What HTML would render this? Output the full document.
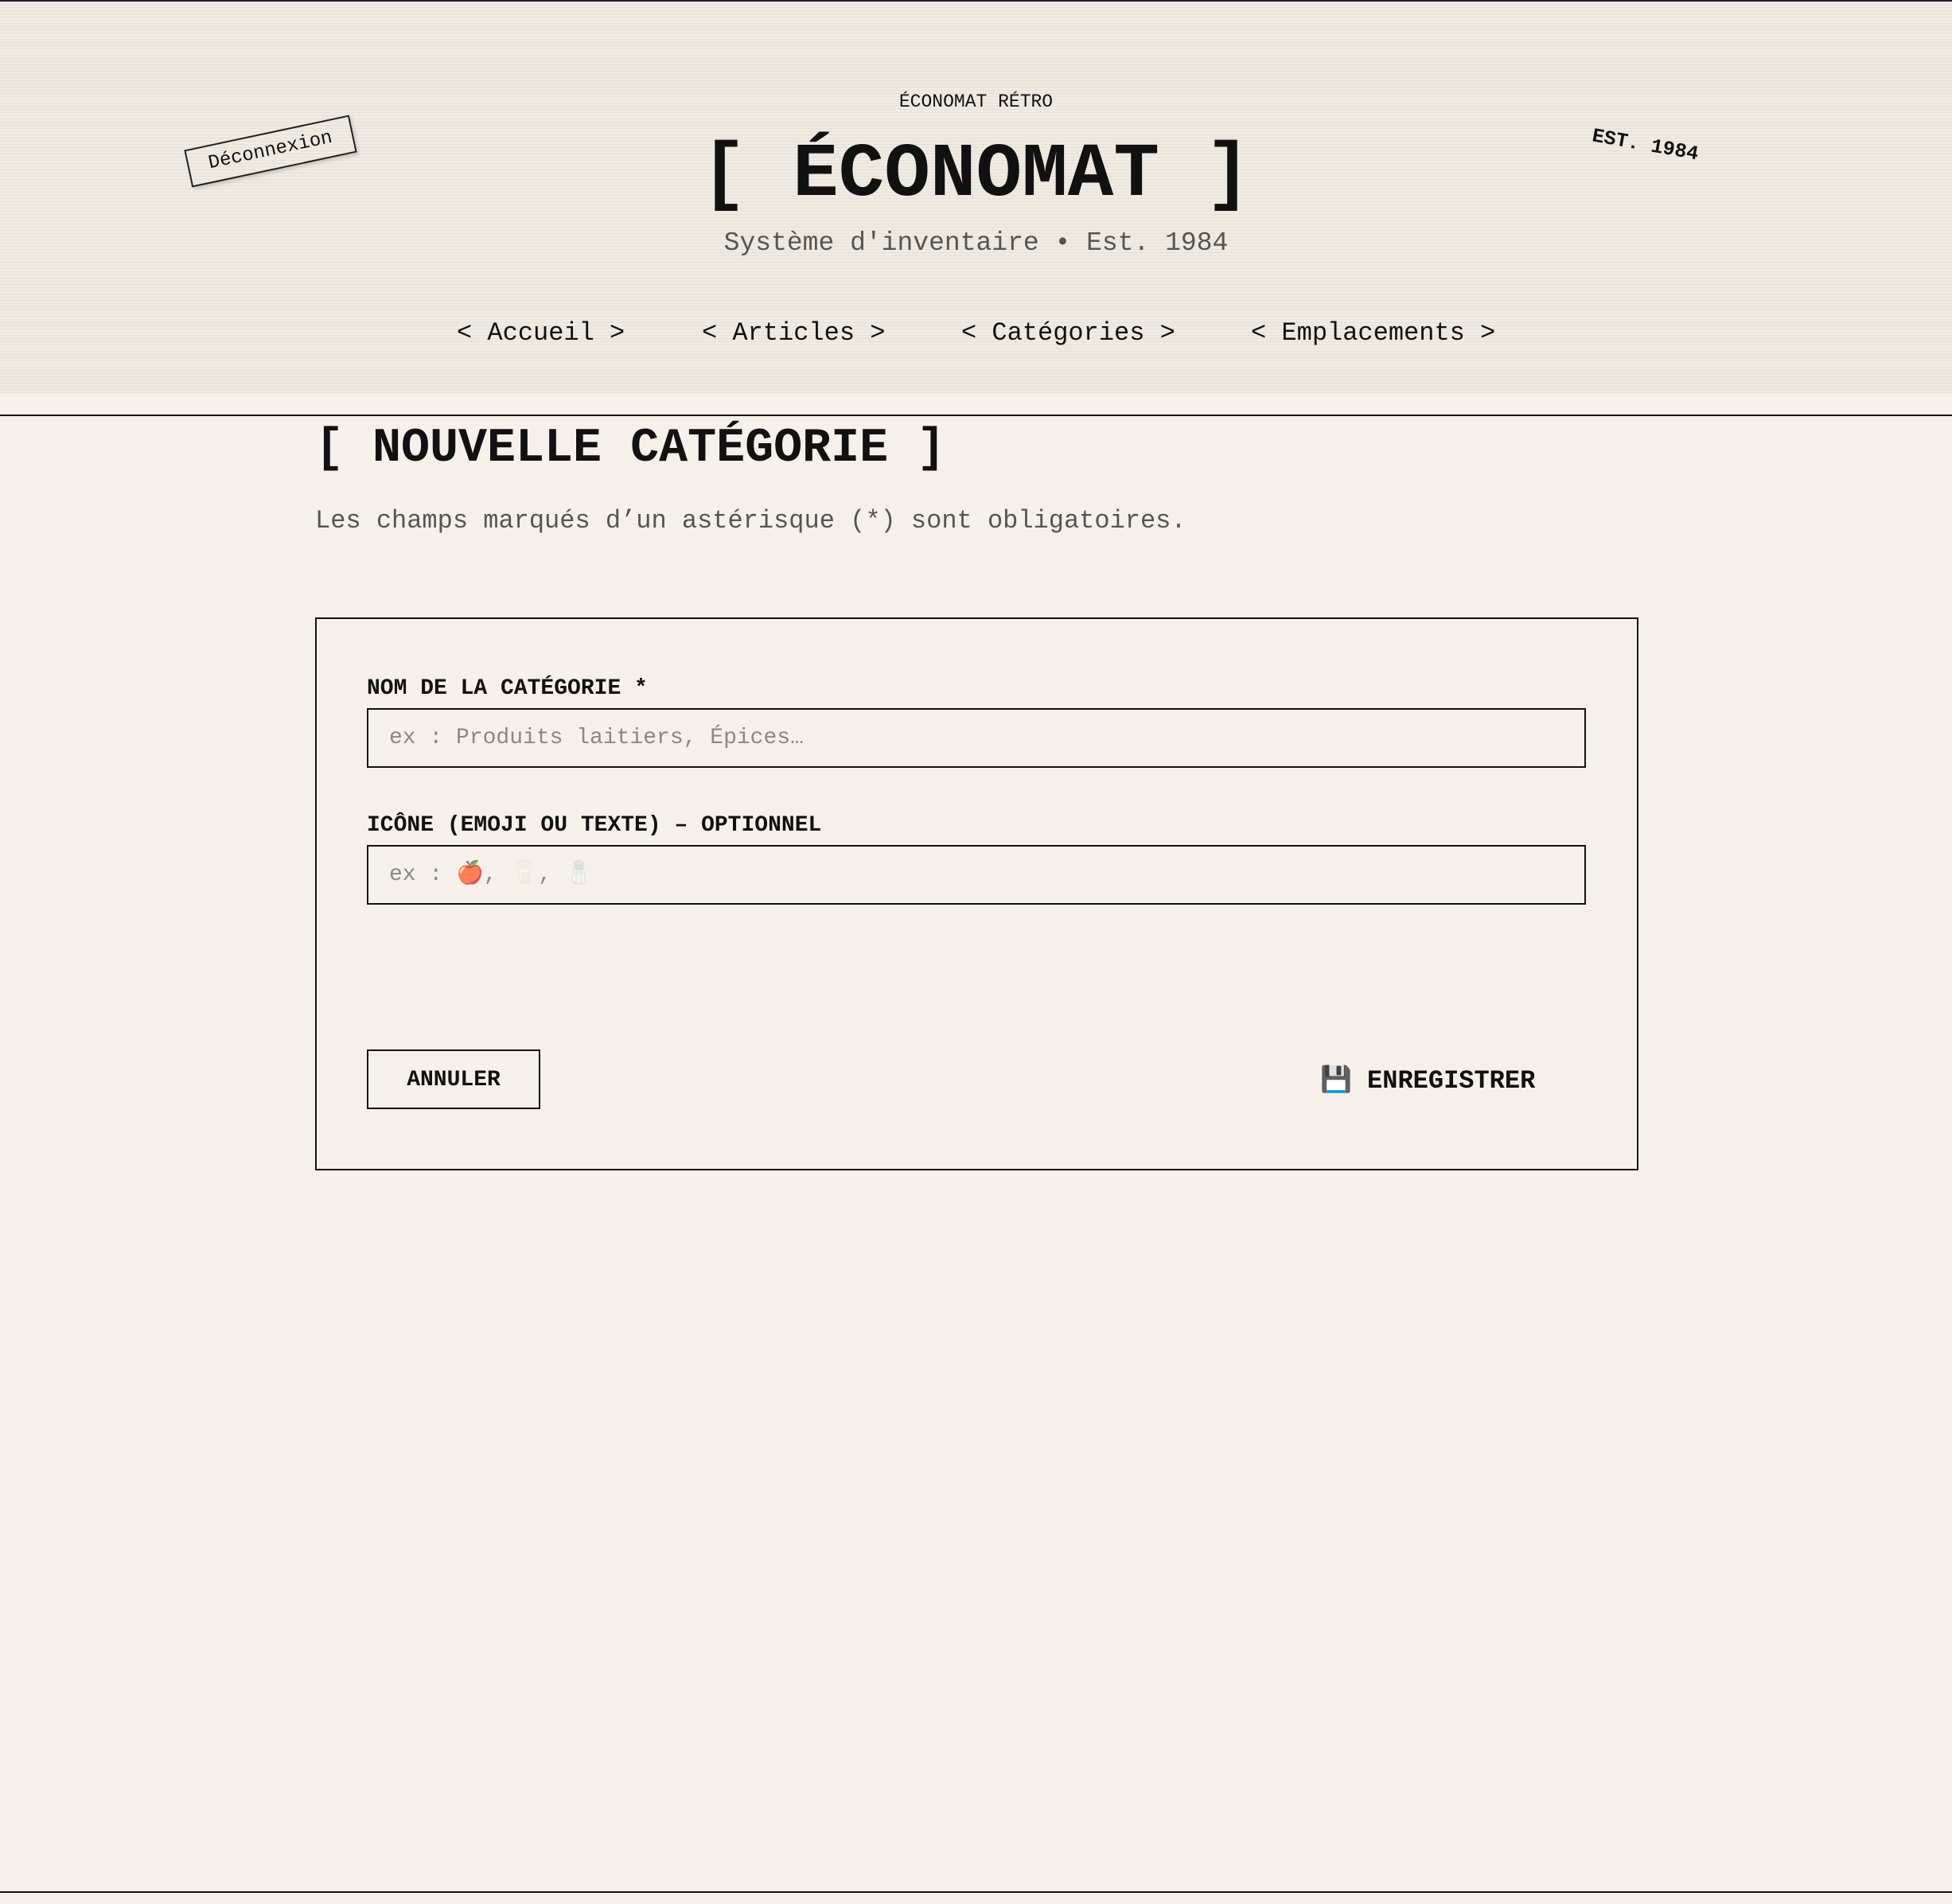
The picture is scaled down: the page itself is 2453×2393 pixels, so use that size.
<!DOCTYPE html>
<html><head><meta charset="utf-8"><style>
*{margin:0;padding:0;box-sizing:border-box}
body{width:2453px;height:2393px;background:#f5f1ea;font-family:"Liberation Mono","DejaVu Sans Mono",monospace;color:#111;position:relative;overflow:hidden}
.top{position:absolute;left:0;top:0;width:2453px;height:2px;background:#222}
.hdr{position:absolute;left:0;top:2px;width:2453px;height:492px;background:repeating-linear-gradient(#efeae2 0 3px,#e6e1d8 3px 4px)}
.hline{position:absolute;left:0;top:521px;width:2453px;height:2px;background:#111}
.bline{position:absolute;left:0;top:2377px;width:2453px;height:2px;background:#111}
.c{position:absolute;left:0;width:2453px;text-align:center;white-space:pre}
.k{position:absolute;white-space:pre}
.box{position:absolute;left:396px;top:776px;width:1663px;height:695px;border:2px solid #111}
.inp{position:absolute;left:461px;width:1532px;height:75px;border:2px solid #111;font-size:28px;color:#888;padding-left:26px;line-height:71px}
.lbl{position:absolute;left:461px;font-size:28px;font-weight:bold}
</style></head><body>
<div class="top"></div>
<div class="hdr"></div>
<div class="c" style="top:115px;font-size:23px">ÉCONOMAT RÉTRO</div>
<div class="c" style="top:160px;font-size:96px;font-weight:bold;line-height:120px">[ ÉCONOMAT ]</div>
<div class="c" style="top:287px;font-size:33px;color:#555">Système d'inventaire • Est. 1984</div>
<div class="k" style="left:574px;top:400px;font-size:32px">&lt; Accueil &gt;</div>
<div class="k" style="left:882px;top:400px;font-size:32px">&lt; Articles &gt;</div>
<div class="k" style="left:1208px;top:400px;font-size:32px">&lt; Catégories &gt;</div>
<div class="k" style="left:1572px;top:400px;font-size:32px">&lt; Emplacements &gt;</div>
<div class="k" style="left:234px;top:166px;width:212px;height:48px;border:2px solid #222;font-size:24px;line-height:44px;text-align:center;transform:rotate(-12deg);box-shadow:2px 3px 4px rgba(0,0,0,.15)">Déconnexion</div>
<div class="k" style="left:2000px;top:168px;font-size:25px;font-weight:bold;transform:rotate(10deg)">EST. 1984</div>
<div class="hline"></div>
<div class="k" style="left:396px;top:526px;font-size:60px;font-weight:bold;line-height:76px">[ NOUVELLE CATÉGORIE ]</div>
<div class="k" style="left:396px;top:636px;font-size:32px;color:#555">Les champs marqués d’un astérisque (*) sont obligatoires.</div>
<div class="box"></div>
<div class="lbl" style="top:850px">NOM DE LA CATÉGORIE *</div>
<div class="inp" style="top:890px">ex : Produits laitiers, Épices…</div>
<div class="lbl" style="top:1022px">ICÔNE (EMOJI OU TEXTE) – OPTIONNEL</div>
<div class="inp" style="top:1062px">ex : <span style="opacity:.7">🍎</span>, <span style="opacity:.3">🥛</span>, <span style="opacity:.3">🧂</span></div>
<div class="k" style="left:461px;top:1319px;width:218px;height:75px;border:2px solid #111;font-size:28px;font-weight:bold;text-align:center;line-height:73px">ANNULER</div>
<div class="k" style="left:1659px;top:1337px;font-size:32px;font-weight:bold;line-height:44px">💾 ENREGISTRER</div>
<div class="bline"></div>
</body></html>
